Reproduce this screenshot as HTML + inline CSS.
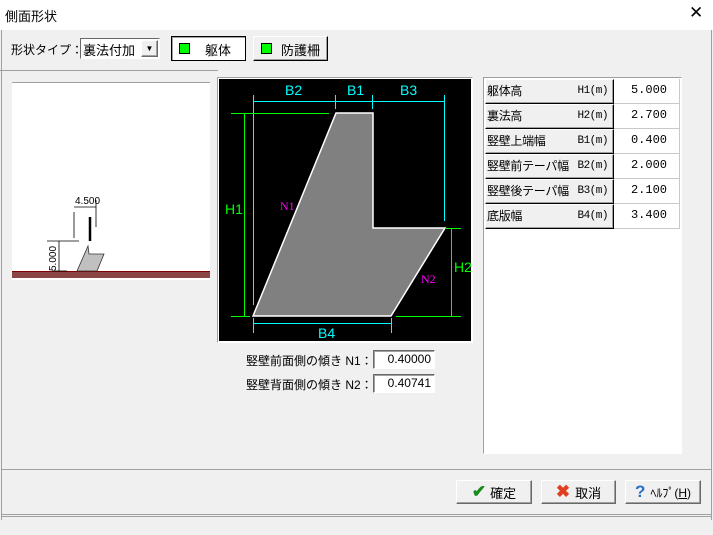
<!DOCTYPE html>
<html><head><meta charset="utf-8"><style>
*{margin:0;padding:0;box-sizing:border-box}
body{width:713px;height:535px;background:#f0f0f0;font-family:"Liberation Sans","Noto Sans CJK JP",sans-serif;font-size:13px;color:#000;position:relative;overflow:hidden}
.a{position:absolute}
.btn{position:absolute;background:#f0f0f0;border:1px solid;border-color:#fff #696969 #696969 #fff;box-shadow:inset -1px -1px 0 #a0a0a0;display:flex;align-items:center;justify-content:center}
.sq{width:11px;height:11px;background:#00ff00;border:1px solid #000;position:absolute;left:7px;top:6px}
.lab{position:absolute;left:485px;width:129px;height:25px;background:#f0f0f0;border:1px solid;border-color:#fff #000 #000 #fff;box-shadow:inset -1px -1px 0 #a0a0a0;font-size:12px;line-height:22px;padding-left:1px;white-space:nowrap;letter-spacing:-0.3px}
.lab span{position:absolute;right:5px;font-family:"Liberation Mono",monospace;font-size:11px;letter-spacing:-0.5px;background:#f0f0f0}
.val{position:absolute;left:614px;width:66px;height:25px;border-bottom:1px solid #c8c8c8;border-right:1px solid #c8c8c8;text-align:right;padding-right:12px;line-height:23px;font-family:"Liberation Mono",monospace;font-size:12px;background:#fff}
.inp{position:absolute;left:373px;width:62px;height:19px;background:#fff;border:1px solid;border-color:#696969 #fff #fff #696969;box-shadow:inset 1px 1px 0 #a0a0a0;text-align:right;padding-right:3px;font-size:12px;line-height:17px}
</style></head><body>
<div class="a" style="left:0;top:0;width:713px;height:30px;background:#fff"></div>
<div class="a" style="left:5px;top:6px;font-size:13px">側面形状</div>
<div class="a" style="left:689px;top:3px;font-size:17px">✕</div>
<div class="a" style="left:1px;top:30px;width:1px;height:490px;background:#a0a0a0"></div>
<div class="a" style="left:711px;top:30px;width:1px;height:490px;background:#a0a0a0"></div>

<div class="a" style="left:11px;top:41px;font-size:12px">形状タイプ：</div>
<div class="a" style="left:80px;top:38px;width:80px;height:21px;background:#fff;border:1px solid;border-color:#696969 #fff #fff #696969"></div>
<div class="a" style="left:83px;top:40px">裏法付加</div>
<div class="btn" style="left:141px;top:40px;width:17px;height:17px;font-size:8px">▼</div>
<div class="a" style="left:171px;top:36px;width:75px;height:25px;border:1px solid #000;background:#fff;box-shadow:inset 1px 1px 0 #a0a0a0"><div class="sq"></div><span class="a" style="left:33px;top:3px">躯体</span></div>
<div class="btn" style="left:253px;top:36px;width:75px;height:25px;border-color:#fff #000 #000 #fff"><div class="sq"></div><span class="a" style="left:27px;top:3px">防護柵</span></div>
<div class="a" style="left:0;top:70px;width:218px;height:1px;background:#a0a0a0"></div>

<div class="a" style="left:12px;top:82px;width:198px;height:198px;background:#fff;border-top:1px solid #a0a0a0"></div>
<svg class="a" style="left:12px;top:82px" width="198" height="198">
<rect x="0" y="189" width="198" height="7" fill="#8b4444"/><line x1="0" y1="189.5" x2="198" y2="189.5" stroke="#800000"/>
<polygon points="65,189 76,164 77,172 92,172 85,189" fill="#c0c0c0" stroke="#333" stroke-width="0.8"/>
<line x1="78" y1="135" x2="78" y2="159" stroke="#000" stroke-width="2.5"/>
<line x1="62" y1="130" x2="62" y2="156" stroke="#000" stroke-width="0.8"/>
<line x1="84" y1="118" x2="84" y2="145" stroke="#000" stroke-width="0.8"/>
<line x1="62" y1="125" x2="84" y2="125" stroke="#000" stroke-width="0.8"/>
<text x="63" y="122" font-size="10" font-family="Liberation Sans">4.500</text>
<line x1="35" y1="159" x2="67" y2="159" stroke="#000" stroke-width="0.8"/>
<line x1="40" y1="189" x2="55" y2="189" stroke="#000" stroke-width="0.8"/>
<line x1="47" y1="159" x2="47" y2="189" stroke="#000" stroke-width="0.8"/>
<text x="0" y="0" font-size="10" font-family="Liberation Sans" transform="translate(44,189) rotate(-90)">5.000</text>
</svg>

<div class="a" style="left:217px;top:77px;width:256px;height:266px;border:1px solid;border-color:#a0a0a0 #fff #fff #a0a0a0;background:#fff"></div>
<svg class="a" style="left:219px;top:79px" width="252" height="262">
<rect width="252" height="262" fill="#000"/>
<g transform="translate(-219,-79)" font-family="Liberation Sans" font-size="14">
<polygon points="253,316 336,113 373,113 373,228 445,228 391,316" fill="#808080" stroke="#fff" stroke-width="1.5"/>
<g stroke="#00ffff" stroke-width="1" fill="none">
<line x1="253.5" y1="95" x2="253.5" y2="305"/><line x1="253" y1="101.5" x2="444" y2="101.5"/>
<line x1="335.5" y1="95" x2="335.5" y2="109"/><line x1="372.5" y1="95" x2="372.5" y2="109"/><line x1="444.5" y1="95" x2="444.5" y2="221"/>
<line x1="253" y1="323.5" x2="391" y2="323.5"/><line x1="253.5" y1="318" x2="253.5" y2="333"/><line x1="391.5" y1="318" x2="391.5" y2="333"/>
</g>
<g fill="#00ffff"><text x="285" y="95">B2</text><text x="347" y="95">B1</text><text x="400" y="95">B3</text><text x="318" y="338">B4</text></g>
<g stroke="#00ff00" stroke-width="1"><line x1="231" y1="113.5" x2="329" y2="113.5"/><line x1="231" y1="316.5" x2="250" y2="316.5"/><line x1="244.5" y1="113" x2="244.5" y2="316"/>
<line x1="445" y1="228.5" x2="461" y2="228.5"/><line x1="451.5" y1="228" x2="451.5" y2="316"/><line x1="396" y1="316.5" x2="461" y2="316.5"/></g>
<g fill="#00ff00"><text x="225" y="214">H1</text><text x="454" y="272">H2</text></g>
<g fill="#ff00ff" font-family="Liberation Serif" font-size="12"><text x="280" y="210">N1</text><text x="421" y="283">N2</text></g>
</g></svg>

<div class="a" style="left:246px;top:352px;font-size:12px">竪壁前面側の傾き N1：</div>
<div class="inp" style="top:350px">0.40000</div>
<div class="a" style="left:246px;top:376px;font-size:12px">竪壁背面側の傾き N2：</div>
<div class="inp" style="top:374px">0.40741</div>

<div class="a" style="left:483px;top:77px;width:199px;height:377px;background:#fff;border:1px solid;border-color:#a0a0a0 #fff #fff #a0a0a0"></div>
<div class="lab" style="top:79px">躯体高<span>H1(m)</span></div><div class="val" style="top:79px">5.000</div>
<div class="lab" style="top:104px">裏法高<span>H2(m)</span></div><div class="val" style="top:104px">2.700</div>
<div class="lab" style="top:129px">竪壁上端幅<span>B1(m)</span></div><div class="val" style="top:129px">0.400</div>
<div class="lab" style="top:154px">竪壁前テーパ幅<span>B2(m)</span></div><div class="val" style="top:154px">2.000</div>
<div class="lab" style="top:179px">竪壁後テーパ幅<span>B3(m)</span></div><div class="val" style="top:179px">2.100</div>
<div class="lab" style="top:204px">底版幅<span>B4(m)</span></div><div class="val" style="top:204px">3.400</div>

<div class="a" style="left:1px;top:469px;width:711px;height:1px;background:#a0a0a0"></div>
<div class="btn" style="left:456px;top:480px;width:76px;height:24px"><span style="color:#1a8a1a;font-size:17px;font-weight:bold;margin-right:4px">✔</span>確定</div>
<div class="btn" style="left:541px;top:480px;width:75px;height:24px"><span style="color:#e04020;font-size:17px;font-weight:bold;margin-right:5px">✖</span>取消</div>
<div class="btn" style="left:625px;top:480px;width:76px;height:24px"><span style="color:#2a70c0;font-size:17px;font-weight:bold;margin-right:5px">?</span><span style="font-size:12px">ﾍﾙﾌﾟ(<u>H</u>)</span></div>
<div class="a" style="left:1px;top:514px;width:711px;height:1px;background:#a0a0a0"></div>
<div class="a" style="left:1px;top:516px;width:711px;height:1px;background:#a0a0a0"></div>
</body></html>
